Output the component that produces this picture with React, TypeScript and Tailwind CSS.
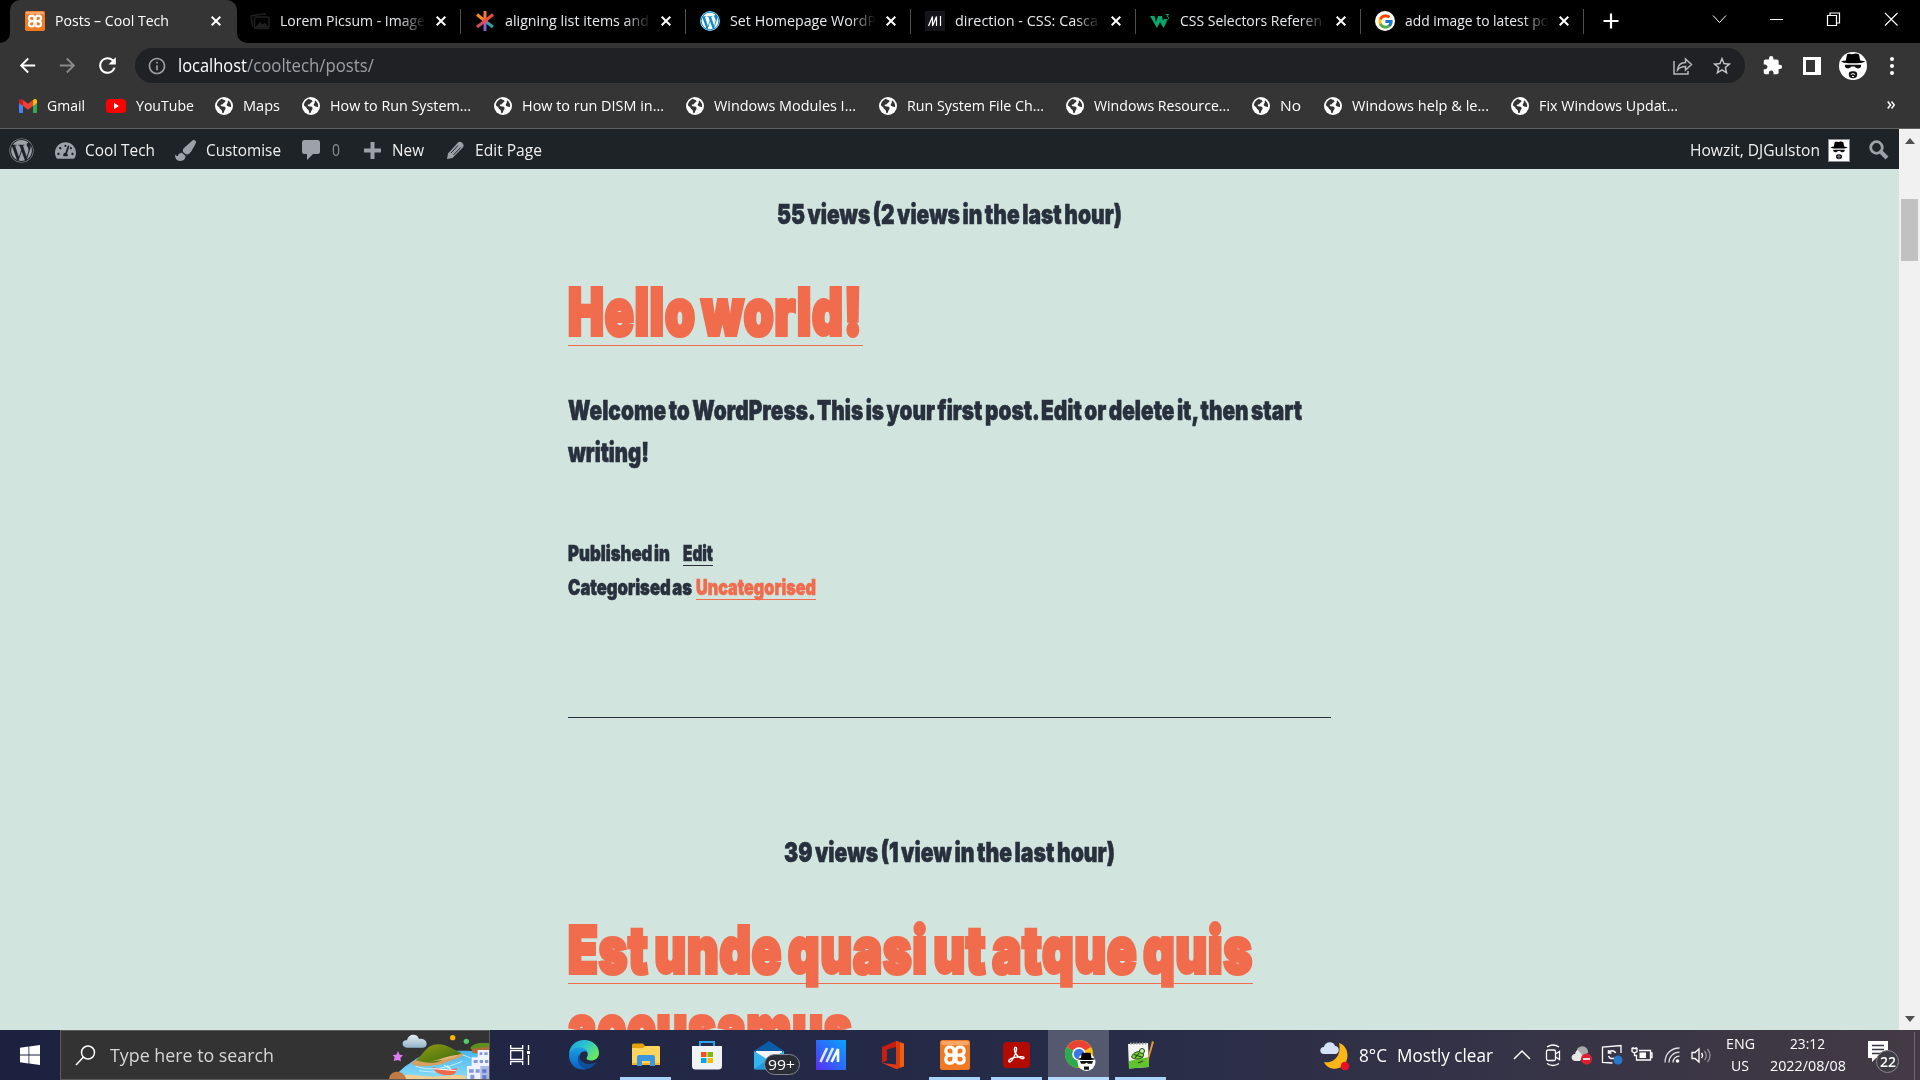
import { useLayoutEffect, useRef, type ReactNode } from "react";
import { FaWordpress, FaTachometerAlt, FaPaintBrush } from "react-icons/fa";
import { FcGoogle } from "react-icons/fc";
import { MdExtension, MdInfoOutline, MdArrowBack, MdArrowForward, MdRefresh, MdStarBorder } from "react-icons/md";

/** One line of text condensed or stretched to fill the width of its box. */
function Fit({ className = "", children }: { className?: string; children: ReactNode }) {
  const inner = useRef<HTMLSpanElement>(null);
  useLayoutEffect(() => {
    const el = inner.current;
    if (!el || !el.parentElement) return;
    const box = el.parentElement.clientWidth;
    el.style.transform = "none";
    const natural = el.getBoundingClientRect().width;
    el.style.transform = `scaleX(${box / natural})`;
  });
  return (
    <span className={`block shrink-0 whitespace-nowrap ${className}`}>
      <span ref={inner} className="block w-max origin-left">
        {children}
      </span>
    </span>
  );
}

/* ---------- icons ---------- */

function Xampp({ className }: { className: string }) {
  return (
    <svg viewBox="0 0 30 30" className={className}>
      <rect width="30" height="30" rx="2.500" fill="#f07a22" />
      <rect x="1" y="1" width="28" height="4" rx="2" fill="#f9b07c" opacity=".8" />
      <path
        d="M11 15.200C7.500 15 5.800 13.500 5.800 11 5.800 8.200 7.500 7 10 7c3.200 0 4 1.500 4 4v8c0 2.500-1 4.200-4 4.200-2.500 0-4.200-1.400-4.200-4 0-2.700 2-4 5.200-4h8c3.200 0 5.200 1.300 5.200 4 0 2.600-1.700 4-4.200 4-3 0-4-1.700-4-4.200v-8c0-2.500.8-4 4-4 2.500 0 4.200 1.200 4.200 4 0 2.500-1.700 4-5.200 4.200"
        fill="none"
        stroke="#fff"
        strokeWidth="3.200"
      />
      <path d="M12.500 13.500h5v3.400h-5z" fill="#fff" />
    </svg>
  );
}

function Globe() {
  return (
    <svg viewBox="0 0 18 18" className="size-[18px] shrink-0">
      <circle cx="9" cy="9" r="9" fill="#fff" />
      <path d="M7 1.800C8 3 10 2.500 10.500 4 11 5.500 8.500 5.200 8.200 6.800 8 8 5.500 7 5.800 8.700 6.200 9.800 10 8.800 10.600 10.800 11 12.500 9.200 13 8.800 15.500 8.500 16.800 6.800 16.300 7 14.500 7.200 12.500 4.800 12.600 4.400 10.500L1.800 8.200C2.200 5.200 4.200 2.600 7 1.800z" fill="#353535" />
      <path d="M13 3.200c2 1.400 3.300 3.500 3.200 6-.6 1.800-1.600.2-2.800.2-1.600-.1-2.300-2-1.200-2.900 1.200-.8.200-2.100.800-3.300z" fill="#353535" />
    </svg>
  );
}

function Gmail() {
  return (
    <svg viewBox="0 0 18 14" className="h-3.5 w-[18px] shrink-0">
      <path d="M0 2v11a1 1 0 0 0 1 1h3V5z" fill="#4285f4" />
      <path d="M18 2v11a1 1 0 0 1-1 1h-3V5z" fill="#34a853" />
      <path d="M14 1l1-.7C16.300-.5 18 .3 18 2v2l-4 3z" fill="#fbbc04" />
      <path d="M4 1L3 .3C1.700-.5 0 .3 0 2v2l4 3z" fill="#c5221f" />
      <path d="M4 1l5 3.800L14 1v6l-5 3.800L4 7z" fill="#ea4335" />
    </svg>
  );
}

function YouTube() {
  return (
    <svg viewBox="0 0 20 14" className="h-3.5 w-5 shrink-0">
      <rect width="20" height="14" rx="3.500" fill="#f00" />
      <path d="M8 4v6l5-3z" fill="#fff" />
    </svg>
  );
}

function Heisenberg({ className, round }: { className: string; round?: boolean }) {
  return (
    <svg viewBox="0 0 28 28" className={className}>
      {round ? <circle cx="14" cy="14" r="14" fill="#fff" /> : <rect width="28" height="28" fill="#fff" />}
      <path d="M8 2.500C10 1 12 2.600 14 2 16 1.200 18 1 20 2.500l1.200 6 5 .8c-2 1.700-6 2-12.200 2S4 11 2 9.300l4.800-.8z" fill="#000" />
      <path d="M6 12.800h16v2c-1 2.200-5 2.200-6.500-.2h-3C11 17 7 17 6 14.800z" fill="#111" />
      <path d="M14 19.200c3.400 0 4.200 1.200 4.200 3.300 0 2.500-1.400 3.700-4.200 3.700s-4.200-1.200-4.200-3.700c0-2.100.8-3.300 4.200-3.300z" fill="#111" />
      <path d="M11.800 22.500q2.200-1.800 4.400 0M13 24.500h2" stroke="#fff" fill="none" />
    </svg>
  );
}

function Close() {
  return (
    <svg viewBox="0 0 10 10" className="size-2.5 shrink-0">
      <path d="M.7.7l8.600 8.600M9.300.7L.7 9.300" stroke="#fff" strokeWidth="2" />
    </svg>
  );
}

function PicsumIcon() {
  return (
    <svg viewBox="0 0 20 20" className="size-5" fill="none" stroke="#202020" strokeWidth="1.500">
      <rect x="4.500" y="6" width="14.500" height="11.500" rx="1.500" />
      <path d="M3.500 15l-1-.5L1 5l14-2.500.3 1.500" />
      <path d="M6.500 16l3.500-4 2.500 2.500 2-2 3 3.500z" fill="#202020" />
    </svg>
  );
}

function Asterisk() {
  return (
    <svg viewBox="0 0 20 20" className="size-5" strokeWidth="3">
      <path d="M10 10V0" stroke="#f0783c" />
      <path d="M10 10L2 3.500" stroke="#f58a1f" />
      <path d="M10 10l8-6.500" stroke="#e8503c" />
      <path d="M10 10L2 16" stroke="#d94a5c" />
      <path d="M10 10l8 6" stroke="#35a0a8" />
      <path d="M10 10v10" stroke="#8a5fd0" />
      <circle cx="10" cy="10" r="2.500" fill="#e64a5e" />
    </svg>
  );
}

function Mdn() {
  return (
    <svg viewBox="0 0 20 20" className="size-5">
      <rect width="20" height="20" fill="#15141a" />
      <path d="M3.500 15L7.500 5.500V15l4-9.500V15M15.500 5v10" stroke="#fff" strokeWidth="1.200" fill="none" />
    </svg>
  );
}

function W3() {
  return (
    <svg viewBox="0 0 20 20" className="size-5">
      <path d="M0 5h4.500L6 11l2-6h4l1 5 1.500-2.500L17 10l-3.500 7L10 11l-3 6z" fill="#04aa6d" />
      <path d="M15.500 3.500h3L17 5.500c2.500 0 2 3 0 3H15.300" stroke="#04aa6d" fill="none" />
    </svg>
  );
}

function Edge() {
  return (
    <svg viewBox="0 0 30 30" className="size-[30px]">
      <defs>
        <linearGradient id="edgeTop" x1="0" y1="0" x2="1" y2=".6">
          <stop offset="0" stopColor="#1f9be0" />
          <stop offset=".5" stopColor="#2cc4d0" />
          <stop offset="1" stopColor="#6be860" />
        </linearGradient>
        <linearGradient id="edgeLeft" x1="0" y1="0" x2="0" y2="1">
          <stop offset="0" stopColor="#1ba0e4" />
          <stop offset="1" stopColor="#0b5fc0" />
        </linearGradient>
      </defs>
      <path d="M0 14C1 5 7 0 15 0c9 0 15 6 15 13 0 5-4 7.500-8 7.500-3 0-4.500-1-4.500-2.200 0-1 1.300-1.500 1.300-4C18.800 11 15 8.500 11 8.500 6 8.500 2 11 0 14z" fill="url(#edgeTop)" />
      <path d="M0 15c1-5 5-7.500 10.500-7.500 4 0 7 2 8 4.500-2-1.500-5-1-7 1.500-3 4.500-1 12 6 15.500C8 31.500 0 25 0 15z" fill="url(#edgeLeft)" />
      <path d="M10 14.500c-3.500 6.500 1 13.500 8 14.500 4-1 7.500-3.500 9.500-7-3 2-7 2.500-10.500 1.500-4.500-1.300-7-5-7-9z" fill="#0f4f9a" />
    </svg>
  );
}

function Explorer() {
  return (
    <svg viewBox="0 0 28 24" className="h-6 w-7">
      <path d="M0 2a1.500 1.500 0 0 1 1.500-1.500H11L13 3v3H0z" fill="#e5a100" />
      <path d="M0 5h11l2-2h14a1 1 0 0 1 1 1v17.500H0z" fill="#ffd55e" />
      <path d="M0 20h28v2H0z" fill="#f2b52c" />
      <path d="M5 23V14a2 2 0 0 1 2-2h14a2 2 0 0 1 2 2v9h-5v-5h-8v5z" fill="#3b97e0" />
    </svg>
  );
}

function Store() {
  return (
    <svg viewBox="0 0 30 30" className="size-[30px]">
      <path d="M8 7V2h14v5" fill="none" stroke="#2ba3ea" strokeWidth="2" />
      <path d="M0 6h30v20a3.500 3.500 0 0 1-3.500 3.500h-23A3.500 3.500 0 0 1 0 26z" fill="#f1f2f4" />
      <path d="M9 12h5.500v5H9z" fill="#f25022" />
      <path d="M15.500 12H21v5h-5.500z" fill="#7fba00" />
      <path d="M9 18h5.500v5H9z" fill="#00a4ef" />
      <path d="M15.500 18H21v5h-5.500z" fill="#ffb900" />
    </svg>
  );
}

function Mail() {
  return (
    <svg viewBox="0 0 30 29" className="h-[29px] w-[30px]">
      <path d="M0 10L15 0l15 10v4H0z" fill="#0a5ba8" />
      <path d="M2 10h26v10H2z" fill="#f2f4f6" />
      <path d="M0 10l15 9.500L30 10v17a1.500 1.500 0 0 1-1.500 1.500h-27A1.500 1.500 0 0 1 0 27z" fill="#35b5f0" />
      <path d="M0 28L15 18l15 10z" fill="#1a8ad8" opacity=".7" />
    </svg>
  );
}

function MyAsus() {
  return (
    <svg viewBox="0 0 30 30" className="size-[30px]">
      <defs>
        <linearGradient id="asus" x1="0" y1="1" x2="1" y2="0">
          <stop offset="0" stopColor="#5b2cf5" />
          <stop offset=".5" stopColor="#2b6cf8" />
          <stop offset="1" stopColor="#08a5ff" />
        </linearGradient>
      </defs>
      <rect width="30" height="30" fill="url(#asus)" />
      <path d="M4.500 22L11 8M10.500 22L17 8" stroke="#fff" strokeWidth="2.600" opacity=".85" />
      <path d="M15.500 22L22 9v13" stroke="#fff" strokeWidth="2.600" fill="none" />
    </svg>
  );
}

function Office() {
  return (
    <svg viewBox="0 0 22 28" className="h-7 w-[22px]">
      <path d="M14 0l8 2.500v23L14 28z" fill="#f06010" />
      <path d="M14 0L0 6v16l5-2.500V8.500L14 6z" fill="#c81e10" />
      <path d="M0 22l14 6 5-3-5-1.500z" fill="#e03a1a" />
      <path d="M14 0v28l4-1V1z" fill="#d83b10" />
    </svg>
  );
}

function Acrobat() {
  return (
    <svg viewBox="0 0 27 26" className="h-[26px] w-[27px]">
      <rect width="27" height="26" rx="4" fill="#b30b00" />
      <path d="M6 19.500c-1.500-2 4.500-5 13-4.700 3.500.2 2 3-1.500 1.200-4-2-6.500-6.500-6-9.500.3-2 2.500-1.500 2 1.200-.7 4.500-4 11-6.300 12.200-.6.200-1 0-1.200-.4z" fill="none" stroke="#fff" strokeWidth="1.400" />
    </svg>
  );
}

function Chrome() {
  return (
    <svg viewBox="0 0 31 31" className="size-[31px]">
      <circle cx="14" cy="14" r="14" fill="#fbc116" />
      <path d="M14 14L1.900 7A14 14 0 0 1 26.100 7z" fill="#ea4335" />
      <path d="M14 14L1.900 7A14 14 0 0 0 12.500 28l3.500-7z" fill="#2da94f" />
      <circle cx="14" cy="14" r="6.800" fill="#fff" />
      <circle cx="14" cy="14" r="5.300" fill="#3b78e7" />
      <circle cx="21.500" cy="22" r="9" fill="#fff" />
      <path d="M16.500 14l1-1.200h8l1 5.200 4 .8c-1 1-4 1.300-9 1.300s-8-.3-9-1.300l3.500-.8z" fill="#000" />
      <path d="M15 21h13l-1 2.800h-4l-1.500-1.300L20 23.800h-4zM19 26.500h5v3.200h-5z" fill="#111" />
    </svg>
  );
}

function NotepadPP() {
  return (
    <svg viewBox="0 0 28 28" className="size-7">
      <path d="M1 3l20-1 1 24-20 1.500z" fill="#f4f6f4" />
      <path d="M2 20l20-4v10L2 27.500z" fill="#5fc42e" />
      <path d="M3 2.500h18" stroke="#999" strokeWidth="2" strokeDasharray="1.500 1.500" />
      <path d="M4.500 16c1.500-5 8-7 11.500-4 2 3-1 6-6 6-3 0-5-1-5.500-2z" fill="#76d13a" stroke="#274b16" />
      <circle cx="15" cy="10" r="2.500" fill="#c7e8b0" stroke="#274b16" />
      <path d="M7 13.500l9 3M12 12l-4 5M11 22l5-2" stroke="#274b16" strokeWidth="1.200" />
      <path d="M27 1l-5.500 18-1.500 3 .2-3.600L25 0z" fill="#e79a28" />
    </svg>
  );
}

function SearchArt() {
  return (
    <svg viewBox="0 9 330 144" className="h-12 w-[110px] shrink-0">
      <defs>
        <linearGradient id="sea" x1="0" y1="0" x2="0" y2="1">
          <stop offset="0" stopColor="#48b5f0" />
          <stop offset="1" stopColor="#8adcf5" />
        </linearGradient>
        <linearGradient id="hill" x1="0" y1="0" x2="1" y2="1">
          <stop offset="0" stopColor="#9a9c12" />
          <stop offset="1" stopColor="#2f6a10" />
        </linearGradient>
        <linearGradient id="cloud" x1="0" y1="0" x2="0" y2="1">
          <stop offset="0" stopColor="#e4eef5" />
          <stop offset="1" stopColor="#93b4c8" />
        </linearGradient>
      </defs>
      <path d="M50 153c0-25 50-50 60-60 40-25 130-30 220-20v80z" fill="url(#sea)" />
      <path d="M110 115q60 22 140-15M120 128q50 8 90 0M180 85q60-15 95 5" stroke="#c4effa" strokeWidth="3" fill="none" />
      <path d="M60 157c10-26 50-14 90-12s80-8 110-2v14z" fill="#f1cf94" />
      <path d="M98 108c8-20 30-12 50-18 40-2 70-22 100-14 20 10-30 18-52 30-30 8-78 14-98 2z" fill="#d6a062" />
      <path d="M110 97c20-10 30-48 66-48 30-1 50 20 72 26-20 12-36 8-56 18-10 14-50 14-82 4z" fill="url(#hill)" />
      <path d="M150 100c30-2 50-18 92-20-20 14-60 18-92 20z" fill="#e0b478" />
      <path d="M275 60c10-14 35-16 55-14v30h-48z" fill="#b06a38" />
      <path d="M275 58c10-14 35-14 55-12v10q-30 2-55 8z" fill="#5d8f1c" />
      <path d="M296 66h34v22h-34zM278 88h52v26h-52zM264 114h66v42h-66z" fill="#f0f2ff" />
      <path d="M302 73h8v8h-8zM316 73h10v8h-10zM284 96h12v9h-12zM302 96h10v9h-10zM318 96h10v9h-10zM270 124h14v10h-14zM290 124h12v10h-12zM274 140h12v14h-12z" fill="#8296dc" />
      <path d="M304 114h26v42h-26z" fill="#a9b6e8" />
      <path d="M310 124h12v10h-12zM310 142h12v12h-12z" fill="#6377c4" />
      <path d="M162 117l40 10 32-6c-2 14-8 20-18 20-24 2-50-4-54-24z" fill="#f06a48" />
      <path d="M164 122l68 6" stroke="#fff" strokeWidth="3" />
      <path d="M205 112l10 14M195 112l20 10" stroke="#dfe" strokeWidth="3" />
      <path d="M30 156c0-32 46-34 52 0z" fill="#bf7b43" />
      <path d="M84 59c-18-1-17-24 0-22 4-22 32-22 36-4 26-6 30 26 12 26z" fill="url(#cloud)" />
      <circle cx="221" cy="29" r="8" fill="#ffb300" />
      <circle cx="262" cy="40" r="8" fill="#4fd06a" />
      <path d="M57 69l5 11 10 2-8 8 2 10-10-4-12 3 3-11-6-7 11-1z" fill="#e07af5" />
    </svg>
  );
}

/* ---------- browser chrome ---------- */

const tabs = [
  { icon: <PicsumIcon />, title: "Lorem Picsum - Image", width: "w-[145px]" },
  { icon: <Asterisk />, title: "aligning list items and", width: "w-[144px]" },
  {
    icon: <FaWordpress className="size-5 rounded-full bg-[#1089c4] text-white" />,
    title: "Set Homepage WordP",
    width: "w-[146px]",
  },
  { icon: <Mdn />, title: "direction - CSS: Casca", width: "w-[143px]" },
  { icon: <W3 />, title: "CSS Selectors Referen", width: "w-[142px]" },
  {
    icon: (
      <span className="flex size-5 items-center justify-center rounded-full bg-white">
        <FcGoogle className="size-[17px]" />
      </span>
    ),
    title: "add image to latest po",
    width: "w-[144px]",
  },
];

function TabStrip() {
  return (
    <div className="flex h-[43px] bg-black text-[15px] leading-[41px] text-[#e8eaed]">
      <div className="flex w-2.5 items-end bg-[#353535]">
        <div className="h-full w-2.5 rounded-br-[10px] bg-black" />
      </div>
      <div className="w-[227px] bg-black">
        <div className="flex h-[43px] items-center rounded-t-[10px] bg-[#353535] pb-px pl-[15px] text-white">
          <Xampp className="size-5 shrink-0" />
          <Fit className="mb-px ml-2.5 w-[114px]">Posts – Cool Tech</Fit>
          <span className="ml-[42px]">
            <Close />
          </span>
        </div>
      </div>
      <div className="flex bg-[#353535]">
        <div className="flex h-[43px] rounded-bl-[10px] bg-black pb-px pl-[13px]">
          {tabs.map((t) => (
            <div key={t.title} className="group flex w-[225px] items-center last:w-[223px]">
              <span className="shrink-0">{t.icon}</span>
              <div className="mb-px ml-2.5 w-[146px] shrink-0 overflow-hidden [mask-image:linear-gradient(to_right,black_82%,transparent)] group-last:w-[144px]">
                <Fit className={t.width}>{t.title}</Fit>
              </div>
              <span className="ml-2.5">
                <Close />
              </span>
              <span className="ml-[14px] h-[25px] w-px bg-[#4f4f4f]" />
            </div>
          ))}
        </div>
      </div>
      <div className="flex flex-1 items-center bg-black pb-px">
        <svg viewBox="0 0 16 16" className="ml-[5px] size-4">
          <path d="M8 .5v15M.5 8h15" stroke="#fff" strokeWidth="2.200" />
        </svg>
        <svg viewBox="0 0 190 16" className="mb-1 ml-[92px] h-4 w-[190px]" fill="none" stroke="#fff">
          <path d="M2 4.500l6.500 7 6.500-7" strokeWidth="1" />
          <path d="M59 8.500h13" />
          <path d="M116.500 4.500h9v10h-9zM119 4.500v-2.500h9.500v10h-3" strokeWidth="1.200" />
          <path d="M174 2l12.500 12.500M186.500 2L174 14.500" strokeWidth="1.100" />
        </svg>
      </div>
    </div>
  );
}

function AddressBar() {
  return (
    <div className="flex h-[45px] items-center bg-[#353535]">
      <MdArrowBack className="ml-4 size-[23px] text-white" />
      <MdArrowForward className="ml-[17px] size-[23px] text-[#8a8a8a]" />
      <MdRefresh className="ml-4 size-[25px] text-white" />
      <div className="ml-[15px] flex h-[35px] w-[1610px] items-center rounded-full bg-[#202124] text-[17.5px] text-[#9aa0a6]">
        <MdInfoOutline className="ml-[12px] size-5 text-[#9aa0a6]" />
        <Fit className="ml-[11px] w-[69px] text-white">localhost</Fit>
        <Fit className="w-[127px]">/cooltech/posts/</Fit>
        <svg viewBox="0 0 20 18" className="ml-[1299px] h-[18px] w-5 shrink-0" fill="none" stroke="#b4b7ba" strokeWidth="1.500">
          <path d="M1 4v13h14v-3M4.500 13c.5-5 3.500-7.500 8-7.500V2l6 5.500-6 5.500V9.500c-3.500 0-6 1-8 3.500z" />
        </svg>
        <MdStarBorder className="ml-[18px] size-[22px] text-[#c4c7ca]" />
      </div>
      <MdExtension className="ml-[17px] size-[21px] shrink-0 text-white" />
      <svg viewBox="0 0 18 18" className="ml-[20px] size-[18px] shrink-0">
        <path d="M0 0h18v18H0z" fill="#fff" />
        <path d="M3 3h9v12H3z" fill="#353535" />
      </svg>
      <Heisenberg round className="ml-[18px] size-7 shrink-0" />
      <svg viewBox="0 0 4 18" className="ml-[23px] h-[18px] w-1 shrink-0" fill="#fff">
        <circle cx="2" cy="2" r="2" />
        <circle cx="2" cy="9" r="2" />
        <circle cx="2" cy="16" r="2" />
      </svg>
    </div>
  );
}

const bookmarks = [
  { icon: <Gmail />, gap: "ml-[19px]", text: "Gmail", width: "ml-[10px] w-[38px]" },
  { icon: <YouTube />, gap: "ml-[21px]", text: "YouTube", width: "ml-[10px] w-[58px]" },
  { icon: <Globe />, gap: "ml-[21px]", text: "Maps", width: "ml-[10px] w-[37px]" },
  { icon: <Globe />, gap: "ml-[22px]", text: "How to Run System...", width: "ml-[10px] w-[141px]" },
  { icon: <Globe />, gap: "ml-[23px]", text: "How to run DISM in...", width: "ml-[10px] w-[142px]" },
  { icon: <Globe />, gap: "ml-[22px]", text: "Windows Modules I...", width: "ml-[10px] w-[142px]" },
  { icon: <Globe />, gap: "ml-[23px]", text: "Run System File Ch...", width: "ml-[10px] w-[137px]" },
  { icon: <Globe />, gap: "ml-[22px]", text: "Windows Resource...", width: "ml-[10px] w-[136px]" },
  { icon: <Globe />, gap: "ml-[22px]", text: "No", width: "ml-[10px] w-[21px]" },
  { icon: <Globe />, gap: "ml-[23px]", text: "Windows help & le...", width: "ml-[10px] w-[137px]" },
  { icon: <Globe />, gap: "ml-[22px]", text: "Fix Windows Updat...", width: "ml-[10px] w-[139px]" },
];

function Bookmarks() {
  return (
    <div className="flex h-[41px] items-start border-b border-[#606060] bg-[#353535] text-[15px] text-white">
      {bookmarks.map((b) => (
        <div key={b.text} className={`flex h-[35px] shrink-0 items-center ${b.gap}`}>
          {b.icon}
          <Fit className={`mb-px ${b.width}`}>{b.text}</Fit>
        </div>
      ))}
      <svg viewBox="0 0 8 8" className="mt-[13px] ml-[209px] size-2" fill="none" stroke="#fff" strokeWidth="1.500">
        <path d="M.7.5L3.500 4 .7 7.500M4.500.5L7.300 4 4.500 7.500" />
      </svg>
    </div>
  );
}

/* ---------- page ---------- */

function AdminBar() {
  return (
    <div className="flex h-10 shrink-0 items-center bg-[#1d2327] pt-[2px] text-[16.25px] text-[#f0f0f1]">
      <FaWordpress className="ml-[9px] size-[25px] text-[#9ca2a7]" />
      <FaTachometerAlt className="ml-[21px] size-[21px] text-[#9ca2a7]" />
      <Fit className="mt-px ml-[9px] w-[70px]">Cool Tech</Fit>
      <FaPaintBrush className="ml-[20px] size-[21px] text-[#9ca2a7]" />
      <Fit className="mt-px ml-[10px] w-[75px]">Customise</Fit>
      <svg viewBox="0 0 18 20" className="ml-[21px] h-5 w-[18px]">
        <path d="M2.500 0h13A2.500 2.500 0 0 1 18 2.500v9a2.500 2.500 0 0 1-2.500 2.500H11l-6 6v-6H2.500A2.500 2.500 0 0 1 0 11.500v-9A2.500 2.500 0 0 1 2.500 0z" fill="#9ca2a7" />
      </svg>
      <Fit className="mt-px ml-[12px] w-[8px] text-[#8a9096]">0</Fit>
      <svg viewBox="0 0 17 17" className="ml-[24px] size-[17px]">
        <path d="M8.500 0v17M0 8.500h17" stroke="#9ca2a7" strokeWidth="4" />
      </svg>
      <Fit className="mt-px ml-[11px] w-[32px]">New</Fit>
      <svg viewBox="0 0 19 19" className="ml-[22px] size-[19px]">
        <path d="M1 18l1-5.500L12 1.500q2-1.500 4 .2l1 1q1.500 2-.2 3.800L6.500 17z" fill="#9ca2a7" />
        <path d="M5 12l7-7.500M7.500 14l7-7.500" stroke="#1d2327" strokeWidth="1" />
      </svg>
      <Fit className="mt-px ml-[10px] w-[67px]">Edit Page</Fit>
      <Fit className="mt-px ml-auto w-[130px]">Howzit, DJGulston</Fit>
      <Heisenberg className="ml-2 h-[23px] w-[22px] border border-[#8c8f94] bg-white" />
      <svg viewBox="0 0 20 20" className="mr-2.5 ml-[19px] size-5" fill="none" stroke="#9ca2a7">
        <circle cx="7.500" cy="7.500" r="5.800" strokeWidth="2.800" />
        <path d="M12 12l6 6" strokeWidth="4" />
      </svg>
    </div>
  );
}

const heading =
  "box-content h-[73px] border-b border-[#f06c4c] text-[64px] leading-[80px] tracking-[0.02em] [word-spacing:-0.1em] text-[#f06c4c] [-webkit-text-stroke:4px_#f06c4c]";

function Posts() {
  return (
    <main className="ml-[568px] flex w-[763px] flex-col pt-6 font-['Inter'] text-[27.5px] leading-[42px] font-black text-[#28303d] [-webkit-text-stroke:0.6px_currentColor] [word-spacing:-0.08em]">
      <Fit className="w-[345px] self-center">55 views (2 views in the last hour)</Fit>
      <h2 className="mt-[37px] font-black">
        <Fit className={`w-[295px] ${heading}`}>Hello world!</Fit>
      </h2>
      <div className="mt-[43px]">
        <Fit className="w-[734px]">Welcome to WordPress. This is your first post. Edit or delete it, then start</Fit>
        <Fit className="w-[81px]">writing!</Fit>
      </div>
      <div className="mt-[63px] flex text-[22px] leading-[34px]">
        <Fit className="h-[29px] w-[102px]">Published in</Fit>
        <Fit className="ml-[13px] box-content h-[29px] w-[30px] border-b border-[#28303d]">Edit</Fit>
      </div>
      <div className="mt-1 flex text-[22px] leading-[34px]">
        <Fit className="h-[29px] w-[124px]">Categorised as</Fit>
        <Fit className="ml-[4px] box-content h-[29px] w-[120px] border-b border-[#f06c4c] text-[#f06c4c]">Uncategorised</Fit>
      </div>
      <hr className="mt-[117px] border-[#28303d]" />
      <Fit className="mt-[113px] w-[331px] self-center">39 views (1 view in the last hour)</Fit>
      <h2 className="mt-[37px] font-black">
        <Fit className={`w-[685px] ${heading}`}>Est unde quasi ut atque quis</Fit>
        <Fit className={`mt-1 w-[285px] ${heading}`}>accusamus</Fit>
      </h2>
    </main>
  );
}

function Scrollbar() {
  return (
    <div className="flex w-[21px] flex-col items-center justify-between bg-[#f1f1f1]">
      <svg viewBox="0 0 10 6" className="mt-[9px] h-1.5 w-2.5">
        <path d="M5 0l5 6H0z" fill="#505050" />
      </svg>
      <div className="mt-[55px] mb-auto h-[62px] w-[17px] bg-[#c1c1c1]" />
      <svg viewBox="0 0 10 6" className="mb-2 h-1.5 w-2.5">
        <path d="M5 6L0 0h10z" fill="#505050" />
      </svg>
    </div>
  );
}

/* ---------- taskbar ---------- */

const apps = [
  { icon: <Edge />, cell: "w-[51px]", bar: "bg-transparent" },
  { icon: <Explorer />, cell: "w-[51px] ml-[11px]", bar: "bg-[#a9d3fb]" },
  { icon: <Store />, cell: "w-[51px] ml-[10px]", bar: "bg-transparent" },
  {
    icon: (
      <span className="relative">
        <Mail />
        <span className="absolute top-[13px] left-[10px] flex h-[21px] w-[36px] items-center justify-center rounded-full border border-[#83868c] bg-[#2a2d35] text-[14px] text-white">
          <Fit className="w-[27px]">99+</Fit>
        </span>
      </span>
    ),
    cell: "w-[51px] ml-[11px]",
    bar: "bg-transparent",
  },
  { icon: <MyAsus />, cell: "w-[51px] ml-[11px]", bar: "bg-transparent" },
  { icon: <Office />, cell: "w-[51px] ml-[11px]", bar: "bg-transparent" },
  { icon: <Xampp className="size-[30px]" />, cell: "w-[51px] ml-[11px]", bar: "bg-[#a9d3fb]" },
  { icon: <Acrobat />, cell: "w-[51px] ml-[11px]", bar: "bg-[#a9d3fb]" },
  {
    icon: (
      <span className="ml-[3px]">
        <Chrome />
      </span>
    ),
    cell: "w-[61px] ml-[6px] bg-[#545970]",
    bar: "bg-[#b4dafd]",
  },
  { icon: <NotepadPP />, cell: "w-[51px] ml-[6px]", bar: "bg-[#a9d3fb]" },
];

function Tray() {
  return (
    <div className="ml-auto flex items-center pt-px text-white">
      <svg viewBox="0 0 30 30" className="size-[30px]">
        <path d="M19 2c10 3 11 17 4 23-7 5-16 3-19-4 9 2 18-6 15-19z" fill="#fcb615" />
        <path d="M4 13c-5 0-5-7 0-7 1-6 10-6 11-1 5 0 5 8 0 8z" fill="#d6e3f7" />
        <circle cx="25" cy="25" r="4.300" fill="#e81123" />
      </svg>
      <Fit className="ml-[9px] w-[28px] text-[18px]">8°C</Fit>
      <Fit className="ml-[10px] w-[96px] text-[18px]">Mostly clear</Fit>
      <svg viewBox="0 0 200 24" className="mb-px ml-[20px] h-6 w-[200px]" fill="none" stroke="#fff" strokeWidth="1.300">
        <path d="M1 16l8-8 8 8" strokeWidth="1.500" />
        <rect x="33.500" y="7" width="9" height="10.500" rx="1.500" />
        <path d="M42.500 11l4-2.500v8l-4-2.500M34 4q6-4 12 0M34 20.500q6 4 12 0" />
        <path d="M62 18c-5-1-4-7 0-7 1-6 8-7 11-2l-6 9z" fill="#e8e8e8" stroke="none" />
        <path d="M64 6c5-6 12-1 11 4l-5 3z" fill="#a9a9ad" stroke="none" />
        <circle cx="73.500" cy="16" r="5.500" fill="#d92231" stroke="none" />
        <path d="M70 16h7" strokeWidth="1.600" />
        <path d="M108 10V2.500L89.500 4v15.500l10 .5" />
        <path d="M102.500 10c-1-3-6-3-7 0M95.500 7v3h3M95.500 13c1 3 4 3 6 2" strokeWidth="1.500" />
        <circle cx="105" cy="17" r="4.500" fill="#2b78c8" stroke="none" />
        <path d="M126 7.500h11.500v9.500H123.500V12M137.500 10h1.500v4.500h-1.500" />
        <path d="M120 4v1.500M123 4v1.500M119 5.500h5v3q-2.500 2.500-5 0zM121.500 9.500v3h2" />
        <path d="M126.500 9.500h6.500v5.500h-6.500z" fill="#fff" stroke="none" />
        <path d="M152 19.500C152 11 158 5 166.500 5M156 19.500c0-6 4.500-10.300 10.500-10.300M160 19.500c0-3.500 2.500-6.300 6.500-6.300" opacity=".85" />
        <circle cx="164.500" cy="18" r="1.800" fill="#fff" stroke="none" />
        <path d="M179 9.500h3l4-3.500v13l-4-3.500h-3zM188.500 10q2 2.500 0 5" />
        <path d="M191.500 8q3.500 4.500 0 9M194.500 6q5 6.500 0 13" opacity=".45" />
      </svg>
      <div className="ml-[12px] flex w-[30px] flex-col items-center pb-px text-[14.5px] leading-[22px]">
        <Fit className="w-[29px]">ENG</Fit>
        <Fit className="w-[18px]">US</Fit>
      </div>
      <div className="ml-[14px] flex w-[77px] flex-col items-center pb-px text-[14.5px] leading-[22px]">
        <Fit className="w-[35px]">23:12</Fit>
        <Fit className="w-[76px]">2022/08/08</Fit>
      </div>
      <div className="relative ml-[22px] h-[30px] w-8">
        <svg viewBox="0 0 32 30" className="h-[30px] w-8">
          <path d="M0 0h20v17H8l-4 4v-4H0z" fill="#fff" />
          <path d="M4 4.500h12M4 8.500h12M4 12.500h12" stroke="#3a3644" strokeWidth="1.300" />
        </svg>
        <span className="absolute top-[9px] left-[8px] flex size-[23px] items-center justify-center rounded-full border border-[#8a8890] bg-[#3f3d44] text-[15px] font-semibold">
          <Fit className="w-[16px]">22</Fit>
        </span>
      </div>
      <span className="mr-[5px] ml-[14px] h-12 w-px bg-[#6d6873]" />
    </div>
  );
}

function Taskbar() {
  return (
    <div className="flex h-[50px] shrink-0 items-center bg-linear-to-r from-[#1c2140] via-[#262b48] via-55% to-[#433a44] font-['Open_Sans']">
      <svg viewBox="0 0 20 20" className="ml-5 size-5" fill="#fff">
        <path d="M0 2.800l8.500-1.200v8H0zM9.300 1.500L20 0v9.600H9.300zM0 10.400h8.500v8L0 17.200zM9.300 10.400H20V20L9.300 18.500z" />
      </svg>
      <div className="ml-5 flex h-[50px] w-[430px] items-center overflow-hidden border border-[#5b5b5b] bg-[#333] text-[18.5px] text-[#d6d6d6]">
        <svg viewBox="0 0 21 21" className="ml-3.5 size-[21px] shrink-0" fill="none" stroke="#fff" strokeWidth="1.500">
          <circle cx="13" cy="7.500" r="6.500" />
          <path d="M8.500 12L1 20" />
        </svg>
        <Fit className="ml-3.5 w-[164px]">Type here to search</Fit>
        <div className="ml-[105px]">
          <SearchArt />
        </div>
      </div>
      <svg viewBox="0 0 21 20" className="ml-[20px] h-5 w-[21px]" fill="none" stroke="#fff" strokeWidth="1.300">
        <path d="M.7 0v3.500h12V0M.7 5.700h12v8.600H.7zM.7 20v-3.500h12V20M18.500 0v5M18.500 10v10" />
        <path d="M17 6h3v3h-3z" fill="#fff" stroke="none" />
      </svg>
      <div className="ml-[27px] flex h-[50px]">
        {apps.map((a, i) => (
          <div key={i} className={`flex flex-col ${a.cell}`}>
            <div className="flex h-[47px] items-center justify-center pt-[3px]">{a.icon}</div>
            <div className={`h-[3px] ${a.bar}`} />
          </div>
        ))}
      </div>
      <Tray />
    </div>
  );
}

export default function App() {
  return (
    <div className="flex h-[1080px] w-[1920px] flex-col overflow-hidden bg-[#d1e4dd]">
      <header className="shrink-0 font-['Open_Sans']">
        <TabStrip />
        <AddressBar />
        <Bookmarks />
      </header>
      <div className="flex h-[901px] shrink-0">
        <div className="flex w-[1899px] flex-col overflow-hidden font-['Open_Sans']">
          <AdminBar />
          <Posts />
        </div>
        <Scrollbar />
      </div>
      <Taskbar />
    </div>
  );
}
